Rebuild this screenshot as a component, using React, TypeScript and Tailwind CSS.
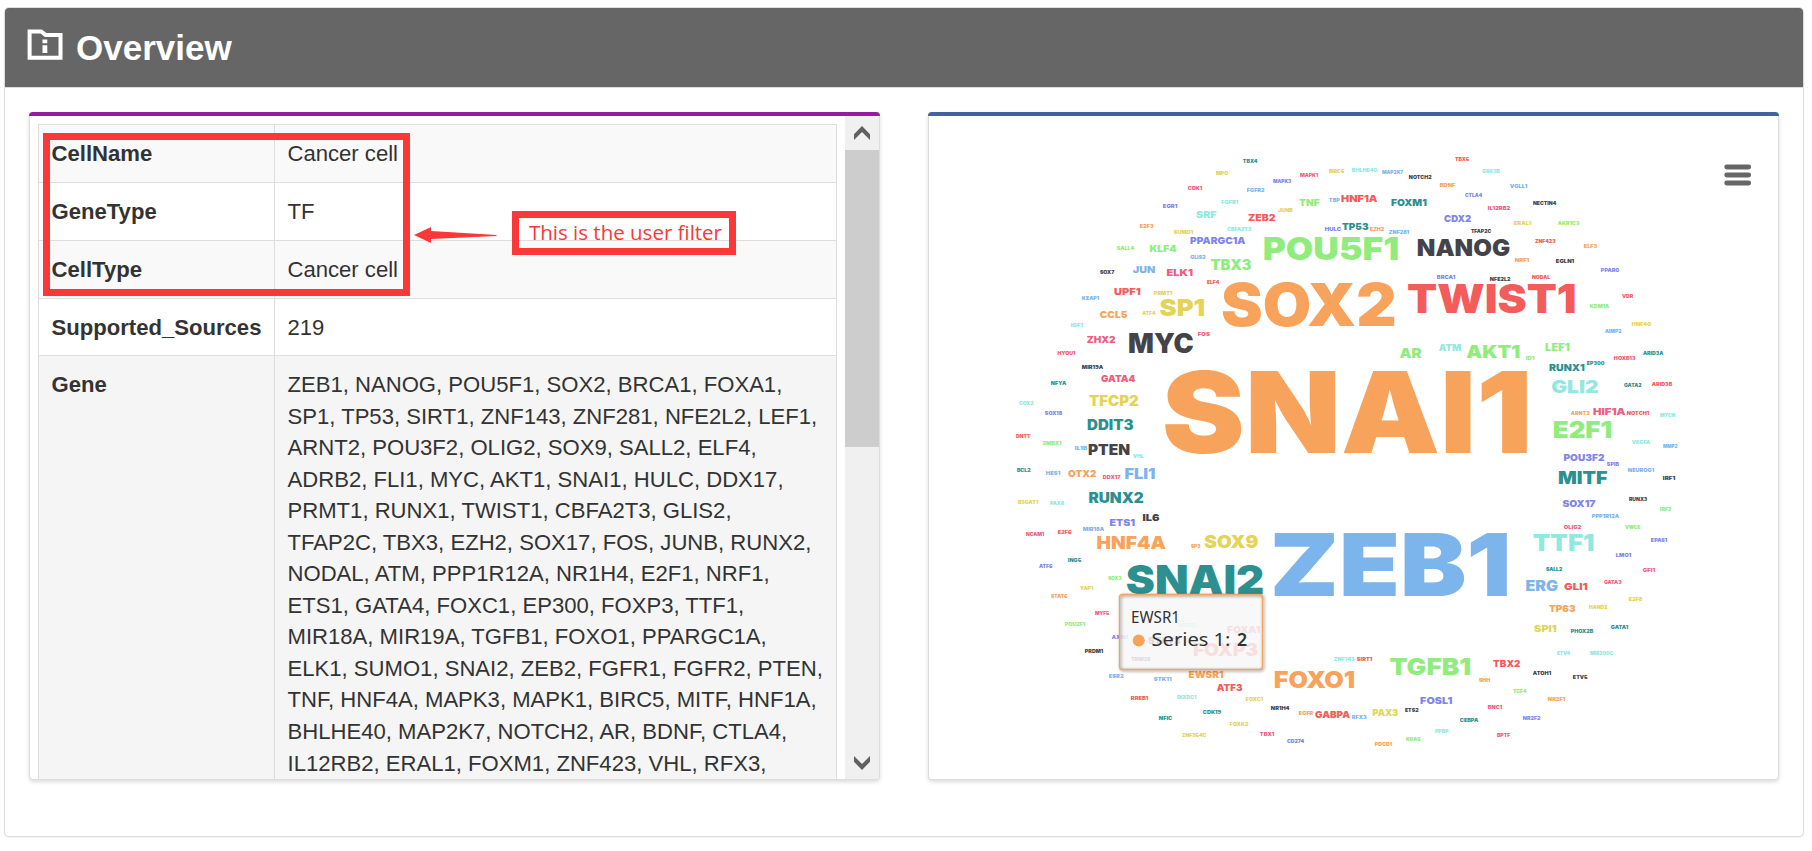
import React from "react";

const COLORS: Record<string, string> = {
  b: "#7cb5ec", k: "#434348", g: "#90ed7d", o: "#f7a35c", p: "#8085e9",
  r: "#f15c80", y: "#e4d354", t: "#2b908f", d: "#f45b5b", c: "#91e8e1",
};

// name, colour key, left, width, vertical centre, cap height
type Word = [string, string, number, number, number, number?];

const WORDS: Word[] = [
  ["SNAI1", "o", 1164.3, 362.7, 412, 82],
  ["ZEB1", "b", 1271.7, 235.3, 564.5, 63],
  ["SOX2", "o", 1222.3, 171.3, 304.7, 42.7],
  ["TWIST1", "d", 1408, 166.7, 298.5, 29],
  ["SNAI2", "t", 1126.7, 135.7, 579.7, 28.7],
  ["POU5F1", "g", 1263.3, 134.3, 248.5, 22.5],
  ["MYC", "k", 1128.7, 63.7, 343, 19.3],
  ["NANOG", "k", 1417.3, 91.7, 247.7, 16.7],
  ["SP1", "y", 1160, 44, 307.3, 17],
  ["E2F1", "g", 1553.3, 57.7, 429.5, 17],
  ["TTF1", "c", 1533.3, 60, 542.5, 17],
  ["TGFB1", "g", 1390, 80, 666.7, 17],
  ["FOXO1", "o", 1274.3, 79.7, 679.3, 17],
  ["AKT1", "g", 1466.7, 52.7, 351, 13],
  ["HNF4A", "o", 1097, 68, 542.7, 13],
  ["SOX9", "y", 1204.7, 52.7, 541.7, 12.7],
  ["GLI2", "c", 1551.7, 46, 386.7, 12.7],
  ["MITF", "t", 1558.3, 48.3, 477.5, 13],
  ["FOXP3", "d", 1193.3, 64, 650, 12.7],
  ["TBX3", "g", 1210.7, 40, 265.3, 10.3],
  ["AR", "g", 1399.7, 21.3, 353, 10],
  ["TFCP2", "y", 1089.3, 48.7, 401.3, 10.3],
  ["DDIT3", "t", 1087.3, 45.7, 425.3, 10.3],
  ["PTEN", "k", 1088.3, 41, 450.3, 10.3],
  ["FLI1", "b", 1124.7, 30, 474.3, 10.3],
  ["RUNX2", "t", 1088.7, 54.3, 498.3, 10.3],
  ["ERG", "b", 1525.7, 31.7, 586, 10.3],
  ["SRF", "c", 1196.3, 19.7, 214.7, 7],
  ["PPARGC1A", "p", 1190.3, 54.7, 240.7, 7],
  ["KLF4", "g", 1149.7, 26.3, 248.7, 7],
  ["JUN", "b", 1133, 21.7, 269.7, 7],
  ["ELK1", "r", 1166.7, 25.7, 272.7, 7],
  ["UPF1", "d", 1114.3, 26, 291.7, 7],
  ["CCL5", "o", 1100, 27, 314.7, 7],
  ["ZHX2", "r", 1087, 28, 339.7, 7],
  ["TNF", "g", 1299.3, 19.7, 202.7, 7],
  ["HNF1A", "d", 1341.3, 35.7, 198, 7],
  ["FOXM1", "t", 1391.3, 35, 202.7, 7],
  ["ZEB2", "d", 1248.3, 26.7, 217.7, 7],
  ["CDX2", "p", 1444.3, 26.3, 218.7, 7],
  ["TP53", "t", 1342.3, 25.7, 226.7, 7],
  ["ATM", "c", 1439, 21.7, 347.7, 7],
  ["LEF1", "g", 1545.3, 24, 347.7, 7.3],
  ["GATA4", "r", 1101.3, 33.7, 378.7, 7],
  ["OTX2", "o", 1068.3, 27.7, 473.7, 7],
  ["IL6", "k", 1142.7, 16.3, 517.7, 7],
  ["ETS1", "p", 1109.7, 24.7, 522.7, 7],
  ["RUNX1", "t", 1549.3, 35, 367.7, 7],
  ["HIF1A", "r", 1593.3, 31.7, 411.7, 7],
  ["POU3F2", "p", 1563.7, 40.3, 457.7, 7],
  ["SOX17", "p", 1562.7, 32.3, 503.7, 7],
  ["EWSR1", "o", 1188.7, 34.3, 674.7, 7],
  ["ATF3", "d", 1217, 25, 687.7, 7],
  ["STAT3", "k", 1148.3, 31.7, 640.3, 7],
  ["FOXA1", "r", 1227.3, 32.7, 629.3, 7],
  ["TBX2", "d", 1493.3, 26.7, 663.7, 7],
  ["FOSL1", "p", 1420.3, 31.7, 700.7, 7],
  ["GABPA", "d", 1315.3, 34.3, 714.7, 7],
  ["PAX3", "y", 1372.7, 25, 712.7, 7],
  ["GLI1", "d", 1564.3, 23, 586.7, 7],
  ["TP63", "o", 1549.3, 25.7, 608.7, 7],
  ["SPI1", "y", 1534.3, 22, 628.7, 7],
  ["TBX4", "t", 1243, 14.3, 161],
  ["MPO", "y", 1216, 12, 173.3],
  ["CDK1", "r", 1188, 14, 188.3],
  ["FGFR2", "b", 1247, 17.3, 190],
  ["EGR1", "p", 1163, 14, 206],
  ["FGFR1", "c", 1221.3, 16.7, 202.3],
  ["E2F3", "o", 1140, 13.3, 226.3],
  ["SUMO1", "y", 1174, 19, 232],
  ["CBFA2T3", "c", 1227.3, 23.7, 229.3],
  ["SALL4", "g", 1117, 17, 248.3],
  ["GLIS2", "b", 1190.3, 15, 257.3],
  ["SOX7", "k", 1100, 14, 272.3],
  ["ELF4", "d", 1207, 12, 282],
  ["PRMT1", "y", 1154, 18, 293],
  ["KEAP1", "b", 1082, 17, 298.3],
  ["ATF4", "y", 1142.3, 13, 313.3],
  ["IGF1", "c", 1071, 12, 325.3],
  ["FOS", "r", 1198, 11.7, 334.3],
  ["HYOU1", "d", 1057.7, 17.3, 353],
  ["BIRC5", "y", 1329, 15, 171.3],
  ["BHLHE40", "c", 1352, 25, 170.3],
  ["MAP2K7", "b", 1382, 21, 172.3],
  ["MAPK1", "r", 1300, 18, 175.3],
  ["MAPK3", "p", 1273, 18, 181.3],
  ["NOTCH2", "k", 1409, 22.3, 177.3],
  ["TBX5", "d", 1455, 14, 159.3],
  ["GSK3B", "c", 1482.3, 17.3, 171.3],
  ["BDNF", "o", 1440, 15, 185.3],
  ["CTLA4", "p", 1465, 17, 195.3],
  ["TBP", "b", 1329, 10.7, 200.3],
  ["JUNB", "y", 1278.3, 14.3, 210.3],
  ["HULC", "p", 1325, 16, 229.3],
  ["EZH2", "o", 1370, 14, 229.3],
  ["ZNF281", "b", 1389, 20, 232],
  ["TFAP2C", "k", 1471, 20, 231],
  ["BRCA1", "p", 1437, 18, 277.3],
  ["NFE2L2", "k", 1490, 20.3, 279],
  ["VGLL1", "b", 1510, 17, 186],
  ["NECTIN4", "k", 1533, 23, 203],
  ["IL12RB2", "r", 1488, 22, 208],
  ["ERAL1", "y", 1514, 17, 223.3],
  ["AKR1C3", "g", 1558, 21.3, 223.3],
  ["ZNF423", "d", 1535, 20.3, 241],
  ["ELF3", "o", 1584, 13, 246.3],
  ["NRF1", "o", 1515, 14, 260.3],
  ["EGLN1", "k", 1556, 18, 261.3],
  ["PPARG", "p", 1601, 18, 270.3],
  ["NODAL", "d", 1532, 18, 277.3],
  ["VDR", "r", 1622, 11, 296],
  ["KDM1A", "g", 1590, 19, 306],
  ["HNF4G", "y", 1632, 19, 324],
  ["AIMP2", "b", 1605, 16.3, 331],
  ["ID1", "g", 1526, 8, 358],
  ["HOXB13", "r", 1614, 21.3, 358.3],
  ["ARID3A", "t", 1643, 20, 353.3],
  ["MIR19A", "k", 1082, 21, 367],
  ["NFYA", "t", 1051, 15, 383.3],
  ["COX2", "c", 1019, 14.3, 403.3],
  ["SOX18", "p", 1045, 17, 413.3],
  ["DNTT", "d", 1016, 14.3, 436],
  ["DMBX1", "g", 1043, 18, 443],
  ["IL1B", "b", 1075, 12, 448],
  ["VHL", "c", 1133, 10.3, 456],
  ["BCL2", "t", 1017, 13.3, 470],
  ["HES1", "b", 1046, 14, 473.3],
  ["DDX17", "r", 1103, 17.3, 477],
  ["B3GAT1", "y", 1018, 20, 502.3],
  ["PAX8", "c", 1050, 14, 503.3],
  ["NCAM1", "r", 1026, 18, 534],
  ["E2F6", "d", 1058, 13.3, 532],
  ["MIR18A", "b", 1083, 21, 529.3],
  ["SP3", "o", 1191, 9.3, 546],
  ["ING5", "t", 1068, 13, 560],
  ["ATF6", "p", 1039, 13.3, 566.3],
  ["EP300", "t", 1587, 17.3, 363.3],
  ["GATA2", "t", 1624, 17.3, 385.3],
  ["ARID3B", "d", 1652, 20, 384.3],
  ["ARNT2", "o", 1571, 18.3, 413.3],
  ["NOTCH1", "d", 1627, 22, 413.3],
  ["MYCN", "c", 1660, 15, 415],
  ["VEGFA", "c", 1632, 18, 442.3],
  ["MMP2", "b", 1663, 14.3, 446],
  ["SPIB", "p", 1607, 11.7, 464],
  ["NEUROG1", "b", 1628, 26, 470.3],
  ["IRF1", "k", 1663, 12, 478.3],
  ["RUNX3", "k", 1629, 18, 499],
  ["IRF2", "g", 1660, 11.3, 509.3],
  ["PPP1R12A", "b", 1592, 27, 516],
  ["OLIG2", "r", 1564, 17, 527],
  ["VWCE", "g", 1625, 15.3, 527],
  ["EPAS1", "p", 1651, 16, 540],
  ["SOX3", "g", 1108, 13.3, 578.3],
  ["YAP1", "y", 1080, 13, 588.3],
  ["STAT6", "o", 1051, 16, 596.3],
  ["MYF5", "r", 1095, 14, 613],
  ["POU2F1", "g", 1065, 20, 624.3],
  ["AXIN1", "p", 1112, 16, 637.3],
  ["PRDM1", "k", 1085, 18, 651],
  ["ESR2", "b", 1109, 14.3, 676.3],
  ["STK11", "b", 1154, 17.3, 679],
  ["RREB1", "d", 1131, 17, 698],
  ["DIXDC1", "c", 1177, 19, 697],
  ["FOXC1", "y", 1246, 17, 699],
  ["CDK19", "t", 1203, 18, 712.3],
  ["NFIC", "t", 1159, 13, 718.3],
  ["FOXK2", "y", 1230, 18.3, 724],
  ["ZNF354C", "y", 1182, 24, 735],
  ["ADRB2", "c", 1178.3, 17.7, 625],
  ["TRIM28", "k", 1131, 19, 659.3],
  ["ZNF143", "c", 1334, 20.3, 659],
  ["SIRT1", "d", 1357, 15, 659],
  ["SHH", "o", 1479, 11, 680],
  ["BNC1", "r", 1488, 14, 707],
  ["NR1H4", "k", 1271, 18.3, 708],
  ["EGFR", "o", 1299, 14, 713.3],
  ["RFX3", "b", 1352, 14.3, 717.3],
  ["ETS2", "k", 1405, 13.3, 710],
  ["CEBPA", "t", 1460, 18, 720],
  ["PPBP", "c", 1435, 13.3, 731],
  ["TBX1", "r", 1260, 14, 734],
  ["KRAS", "g", 1406, 14.3, 739],
  ["CD274", "p", 1287, 17, 741],
  ["PDCD1", "o", 1375, 17, 744],
  ["LMO1", "p", 1616, 15, 555],
  ["SALL2", "t", 1546, 16, 569],
  ["GFI1", "r", 1643, 12, 570],
  ["GATA3", "r", 1604, 17.3, 582],
  ["E2F8", "y", 1629, 13.3, 599],
  ["HAND2", "y", 1589, 18.3, 607.3],
  ["PHOX2B", "t", 1571, 22, 631],
  ["GATA1", "t", 1611, 17, 627.3],
  ["ETV4", "c", 1557, 13, 653],
  ["MIR200C", "c", 1590, 23, 653],
  ["ATOH1", "k", 1533, 18, 673],
  ["ETV5", "k", 1573, 14.3, 677],
  ["TCF4", "g", 1513, 13.3, 691],
  ["NR2F1", "o", 1548, 17, 699.3],
  ["NR2F2", "p", 1523, 17.3, 718],
  ["BPTF", "r", 1497, 13, 735],
];

const GENE_LINES = [
  "ZEB1, NANOG, POU5F1, SOX2, BRCA1, FOXA1,",
  "SP1, TP53, SIRT1, ZNF143, ZNF281, NFE2L2, LEF1,",
  "ARNT2, POU3F2, OLIG2, SOX9, SALL2, ELF4,",
  "ADRB2, FLI1, MYC, AKT1, SNAI1, HULC, DDX17,",
  "PRMT1, RUNX1, TWIST1, CBFA2T3, GLIS2,",
  "TFAP2C, TBX3, EZH2, SOX17, FOS, JUNB, RUNX2,",
  "NODAL, ATM, PPP1R12A, NR1H4, E2F1, NRF1,",
  "ETS1, GATA4, FOXC1, EP300, FOXP3, TTF1,",
  "MIR18A, MIR19A, TGFB1, FOXO1, PPARGC1A,",
  "ELK1, SUMO1, SNAI2, ZEB2, FGFR1, FGFR2, PTEN,",
  "TNF, HNF4A, MAPK3, MAPK1, BIRC5, MITF, HNF1A,",
  "BHLHE40, MAP2K7, NOTCH2, AR, BDNF, CTLA4,",
  "IL12RB2, ERAL1, FOXM1, ZNF423, VHL, RFX3,",
];

function FolderInfoIcon() {
  return (
    <svg className="mt-[21px] h-[31px] w-[36px] shrink-0" viewBox="0 0 36 31" fill="none">
      <path d="M2.6 28.700V2.500h11.600l4.300 3.400h15v22.800z" stroke="#fff" strokeWidth="4" />
      <path d="M15.500 10.500h4.800v3.700h-4.800zM15.500 16.300h4.800v7.700h-4.800z" fill="#fff" />
    </svg>
  );
}

function Row({ label, className, children }: { label: string; className: string; children: React.ReactNode }) {
  return (
    <div className={`flex shrink-0 border-b border-[#ddd] ${className}`}>
      <div className="w-[236px] shrink-0 border-r border-[#ddd] pt-[13px] pl-[12.500px] font-bold whitespace-nowrap">{label}</div>
      <div className="flex-1 pt-[13px] pl-[12.500px] whitespace-nowrap">{children}</div>
    </div>
  );
}

function ScrollBar() {
  return (
    <div className="flex w-[34px] shrink-0 flex-col bg-[#f0f0f0]">
      <div className="flex h-[34px] items-center justify-center">
        <svg className="h-[14px] w-[16px]" viewBox="0 0 16 14">
          <path d="M0 8.2L8 0l8 8.2V14L8 6 0 14z" fill="#606060" />
        </svg>
      </div>
      <div className="h-[297px] bg-[#cdcdcd]" />
      <div className="mt-auto flex h-[32px] items-center justify-center">
        <svg className="h-[14px] w-[16px]" viewBox="0 0 16 14">
          <path d="M0 5.8L8 14l8-8.2V0L8 8 0 0z" fill="#606060" />
        </svg>
      </div>
    </div>
  );
}

function FilterTable() {
  return (
    <section className="relative flex h-[668px] w-[851px] flex-col overflow-visible rounded-[4px] border-x border-b border-[#ddd] bg-white shadow-[0_2px_4px_rgba(0,0,0,0.14)]">
      <div className="-mx-px h-[4px] shrink-0 rounded-t-[4px] bg-[#951b9f]" />
      <div className="flex min-h-0 flex-1 overflow-hidden rounded-b-[3px]">
        <div className="flex flex-1 flex-col overflow-hidden pt-[8px] pl-[8px]">
          <div className="flex w-[799px] shrink-0 flex-col border-x border-t border-[#ddd] text-[22.100px] leading-[31.550px] text-[#333]">
            <Row label="CellName" className="h-[58px] bg-[#f9f9f9]">Cancer cell</Row>
            <Row label="GeneType" className="h-[58px] bg-white">TF</Row>
            <Row label="CellType" className="h-[58px] bg-[#f9f9f9]">Cancer cell</Row>
            <Row label="Supported_Sources" className="h-[57px] bg-white">219</Row>
            <Row label="Gene" className="h-[460px] bg-[#f5f5f5]">
              {GENE_LINES.map((line) => (
                <div key={line}>{line}</div>
              ))}
            </Row>
          </div>
        </div>
        <ScrollBar />
      </div>
      <div className="absolute top-[21px] left-[13px] h-[163px] w-[367px] border-[7px] border-[#fc3737]" />
      <svg className="absolute top-[115px] left-[384px] h-[16px] w-[83px]" viewBox="0 0 83 16">
        <path d="M0 8L17 0v4l65.500 4v1L17 12v4z" fill="#fc3737" />
      </svg>
      <div className="absolute top-[99px] left-[482px] h-[44px] w-[224px] border-[7px] border-[#fc3737]">
        <svg className="h-[30px] w-[210px]" viewBox="0 0 210 30">
          <text x="10" y="22" textLength="193" fontSize="20.500" fill="#fc3737" className="font-['Open_Sans',sans-serif]">This is the user filter</text>
        </svg>
      </div>
    </section>
  );
}

function WordCloud() {
  return (
    <svg className="h-[662px] w-[849px]" viewBox="929 116 849 662">
      <g className="font-['Inter',sans-serif] font-black">
        {WORDS.map(([name, color, left, width, middle, cap = 3.8]) => (
          <text
            key={name + left}
            x={left - cap * 0.03}
            y={middle + cap / 2}
            fontSize={cap / 0.727}
            textLength={width + cap * 0.1}
            lengthAdjust="spacingAndGlyphs"
            fill={COLORS[color]}
          >
            {name}
          </text>
        ))}
      </g>
      <g stroke="#666" strokeWidth="4.800" strokeLinecap="round">
        <path d="M1726.700 167h22M1726.700 175h22M1726.700 183h22" />
      </g>
      <g>
        <rect x="1119.500" y="594.500" width="143" height="75" rx="3" fill="#f7f7f7" fillOpacity="0.85" />
        <rect x="1119.500" y="594.500" width="143" height="75" rx="3" fill="none" stroke="#f7a35c" strokeWidth="1.300" className="drop-shadow-[1.500px_1.500px_1.500px_rgba(0,0,0,0.5)]" />
        <g fill="#333" className="font-['Noto_Sans',sans-serif]">
          <text x="1131" y="623" fontSize="16.500" textLength="49" lengthAdjust="spacingAndGlyphs">EWSR1</text>
          <text x="1151.500" y="645.500" fontSize="17.800" textLength="79" lengthAdjust="spacingAndGlyphs">Series 1:</text>
          <text x="1237" y="645.500" fontSize="17.800" className="font-semibold">2</text>
        </g>
        <circle cx="1138.700" cy="640.500" r="6" fill="#f7a35c" />
      </g>
    </svg>
  );
}

export default function App() {
  return (
    <div className="h-[851px] w-[1812px] overflow-hidden bg-white pt-[7px] pl-[4px] font-['Liberation_Sans',sans-serif]">
      <main className="flex h-[830px] w-[1800px] flex-col rounded-[5px] border border-[#ddd] bg-white shadow-[0_1px_2px_rgba(0,0,0,0.06)]">
        <header className="flex h-[80px] shrink-0 rounded-t-[4px] border-b border-[#ddd] bg-[#666] pl-[22px]">
          <FolderInfoIcon />
          <h1 className="ml-[13px] pt-[20px] text-[35px] leading-[40px] font-bold text-white">Overview</h1>
        </header>
        <div className="flex gap-[48px] pt-[24px] pl-[24px]">
          <FilterTable />
          <section className="flex h-[668px] w-[851px] flex-col rounded-[4px] border-x border-b border-[#ddd] bg-white shadow-[0_2px_4px_rgba(0,0,0,0.14)]">
            <div className="-mx-px h-[4px] shrink-0 rounded-t-[4px] bg-[#41629f]" />
            <WordCloud />
          </section>
        </div>
      </main>
    </div>
  );
}
